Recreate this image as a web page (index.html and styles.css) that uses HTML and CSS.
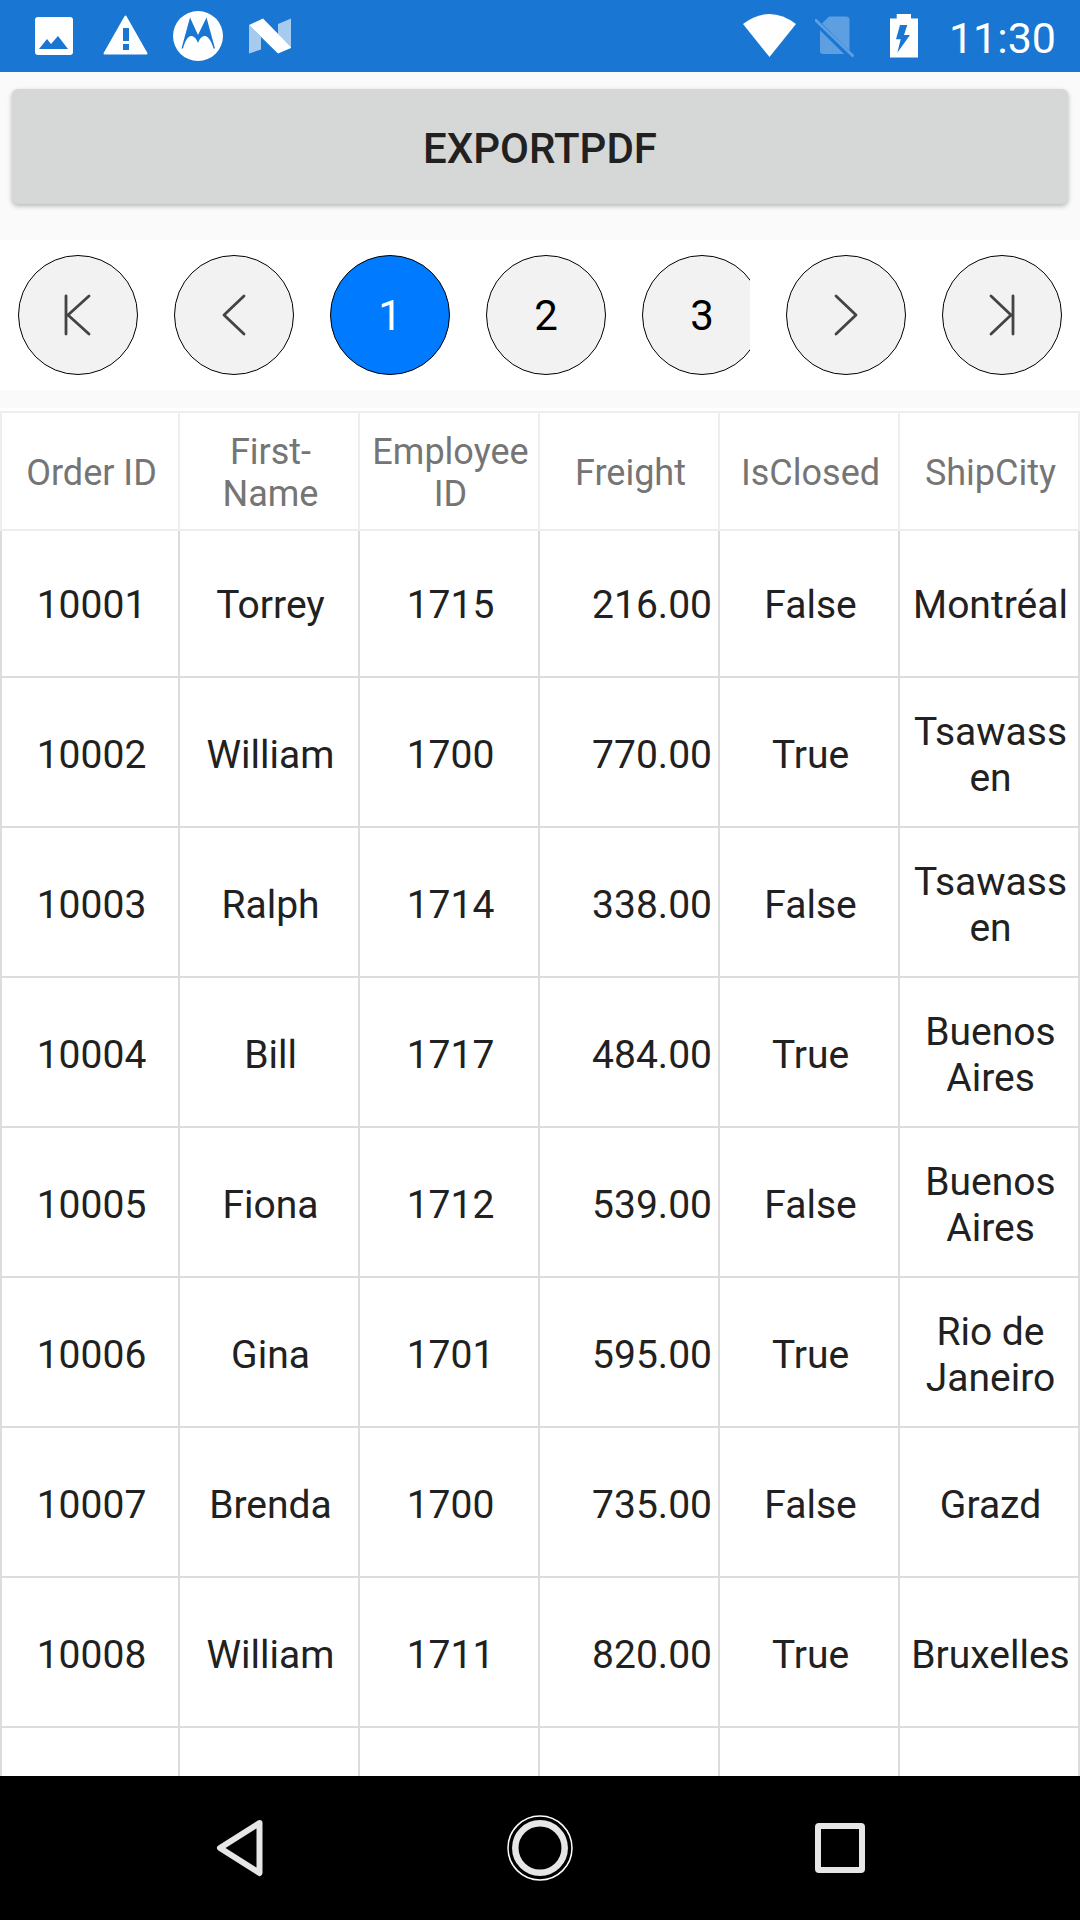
FILE: index.html
```html
<!DOCTYPE html>
<html lang="en">
<head>
    <meta charset="UTF-8">
    <meta name="viewport" content="width=device-width, initial-scale=1.0">
    <title>Export PDF</title>
    <link rel="stylesheet" href="styles.css">
</head>
<body>
    <div class="screen">
        <!-- status bar -->
        <div class="statusbar">
            <div class="status-left">
                <svg class="si pic" viewBox="35 11 38 50"><rect x="35" y="17" width="38" height="38" rx="3" fill="#fff"/><path d="M39 49 47 39 51 44 58 36 68 49Z" fill="#1976d2"/></svg>
                <svg class="si warn" viewBox="103 11 45 50"><path d="M125.5 16.5 104.5 53.5H146.5Z" fill="#fff" stroke="#fff" stroke-width="2" stroke-linejoin="round"/><path d="M123 28h6v13h-6zM123 44h6v6h-6z" fill="#1976d2"/></svg>
                <svg class="si moto" viewBox="173 11 50 50"><circle cx="198" cy="36" r="25" fill="#fff"/><path d="M181.5 48.5 190 17.5 198 35 206.5 17.5 215 48.5H213.5C211.500 41 208 36 205 36 202 36 200 38 198 43 196 38 194 36 191 36 188 36 185 41 183 48.500Z" fill="#1976d2"/></svg>
                <svg class="si nlogo" viewBox="248 11 44 50"><path d="M249 25 261 37V49.500L249 53.500ZM278 24 291 18.500V47L278 34Z" fill="#fff" opacity=".62"/><path d="M249 25 263 18.500 291 47V48L278 53.500Z" fill="#fff"/></svg>
            </div>
            <div class="status-right">
                <svg class="si wifi" viewBox="743 11 53 50"><path d="M743 24Q769.500 4 796 24L769.500 57Z" fill="#fff"/></svg>
                <svg class="si sim" viewBox="815 11 39 50"><path d="M829 16.500H846Q849.500 16.500 849.500 20V51Q849.500 54 846 54H823Q820 54 820 51V25.500Z" fill="#5d9fe1"/><path d="M813 19 852 57.500" stroke="#1976d2" stroke-width="6"/><path d="M815 19.500 853.500 56.500" stroke="#5d9fe1" stroke-width="3"/></svg>
                <svg class="si bat" viewBox="890 11 28 50"><path d="M896.700 14H911V18.500H918V57.500H890V18.500H896.700Z" fill="#fff"/><path d="M900 25H907.300L904 35H910L897.300 52.700 900.700 39.300H896Z" fill="#1976d2"/></svg>
                <span class="clock">11:30</span>
            </div>
        </div>

        <div class="toolbar">
            <button class="export-btn">EXPORTPDF</button>
        </div>

        <!-- pager -->
        <div class="pager">
            <div class="page-btn">
                <svg viewBox="0 0 120 120"><path d="M48 41V79M71 41 50 60 71 79"/></svg>
            </div>
            <div class="page-btn">
                <svg viewBox="0 0 120 120"><path d="M70 41 50 60 70 79"/></svg>
            </div>
            <div class="page-list">
                <div class="page-btn active">1</div>
                <div class="page-btn">2</div>
                <div class="page-btn">3</div>
            </div>
            <div class="page-btn">
                <svg viewBox="0 0 120 120"><path d="M50 41 70 60 50 79"/></svg>
            </div>
            <div class="page-btn">
                <svg viewBox="0 0 120 120"><path d="M71 41V79M49 41 69 60 49 79"/></svg>
            </div>
        </div>

        <!-- grid -->
        <div class="grid">
            <div class="row head">
                <div class="cell">Order ID</div>
                <div class="cell">First-<br>Name</div>
                <div class="cell">Employee ID</div>
                <div class="cell">Freight</div>
                <div class="cell">IsClosed</div>
                <div class="cell">ShipCity</div>
            </div>
            <div class="row first">
                <div class="cell">10001</div>
                <div class="cell">Torrey</div>
                <div class="cell">1715</div>
                <div class="cell num">216.00</div>
                <div class="cell">False</div>
                <div class="cell">Montréal</div>
            </div>
            <div class="row">
                <div class="cell">10002</div>
                <div class="cell">William</div>
                <div class="cell">1700</div>
                <div class="cell num">770.00</div>
                <div class="cell">True</div>
                <div class="cell">Tsawass<br>en</div>
            </div>
            <div class="row">
                <div class="cell">10003</div>
                <div class="cell">Ralph</div>
                <div class="cell">1714</div>
                <div class="cell num">338.00</div>
                <div class="cell">False</div>
                <div class="cell">Tsawass<br>en</div>
            </div>
            <div class="row">
                <div class="cell">10004</div>
                <div class="cell">Bill</div>
                <div class="cell">1717</div>
                <div class="cell num">484.00</div>
                <div class="cell">True</div>
                <div class="cell">Buenos Aires</div>
            </div>
            <div class="row">
                <div class="cell">10005</div>
                <div class="cell">Fiona</div>
                <div class="cell">1712</div>
                <div class="cell num">539.00</div>
                <div class="cell">False</div>
                <div class="cell">Buenos Aires</div>
            </div>
            <div class="row">
                <div class="cell">10006</div>
                <div class="cell">Gina</div>
                <div class="cell">1701</div>
                <div class="cell num">595.00</div>
                <div class="cell">True</div>
                <div class="cell">Rio de Janeiro</div>
            </div>
            <div class="row">
                <div class="cell">10007</div>
                <div class="cell">Brenda</div>
                <div class="cell">1700</div>
                <div class="cell num">735.00</div>
                <div class="cell">False</div>
                <div class="cell">Grazd</div>
            </div>
            <div class="row">
                <div class="cell">10008</div>
                <div class="cell">William</div>
                <div class="cell">1711</div>
                <div class="cell num">820.00</div>
                <div class="cell">True</div>
                <div class="cell">Bruxelles</div>
            </div>
            <div class="row">
                <div class="cell"></div>
                <div class="cell"></div>
                <div class="cell"></div>
                <div class="cell"></div>
                <div class="cell"></div>
                <div class="cell"></div>
            </div>
        </div>

        <!-- nav bar -->
        <div class="navbar">
            <div class="nav-slot">
                <svg class="nav-icon" viewBox="0 0 66 66"><path d="M55.500 8 16 33 55.500 58Z" transform="translate(-3 0)"/></svg>
            </div>
            <div class="nav-slot">
                <svg class="nav-icon" viewBox="0 0 66 66"><circle class="home-outer" cx="33" cy="33" r="32"/><circle class="home-inner" cx="33" cy="33" r="24.700"/></svg>
            </div>
            <div class="nav-slot">
                <svg class="nav-icon" viewBox="0 0 66 66"><rect x="11" y="11" width="44" height="44" rx="1"/></svg>
            </div>
        </div>
    </div>
</body>
</html>
```

FILE: styles.css
```css
* {
    box-sizing: border-box;
}
body {
    margin: 0;
    font-family: Roboto, "Liberation Sans", sans-serif;
}
.screen {
    width: 1080px;
    height: 1920px;
    display: flex;
    flex-direction: column;
    background-color: #fafafa;
    overflow: hidden;
}

/* status bar */
.statusbar {
    height: 72px;
    flex: none;
    display: flex;
    justify-content: space-between;
    align-items: center;
    padding: 0 24px 0 35px;
    background-color: #1976d2;
}
.status-left, .status-right {
    display: flex;
    align-items: center;
}
.si {
    height: 50px;
    display: block;
}
.pic { width: 38px; }
.warn { width: 45px; margin-left: 30px; }
.moto { width: 50px; margin-left: 25px; }
.nlogo { width: 44px; margin-left: 25px; }
.wifi { width: 53px; }
.sim { width: 39px; margin-left: 19px; }
.bat { width: 28px; margin-left: 36px; }
.clock {
    margin-left: 31px;
    padding-top: 3px;
    color: #fff;
    font-size: 43px;
    line-height: 50px;
}

/* export button */
.toolbar {
    height: 168px;
    flex: none;
    padding: 17px 12px 0;
}
.export-btn {
    display: block;
    width: 100%;
    height: 115px;
    padding: 3px 0 0;
    border: none;
    border-radius: 6px;
    background-color: #d6d7d7;
    color: #212121;
    font-family: inherit;
    font-size: 42px;
    font-weight: 500;
    box-shadow: 0 2px 5px rgba(0, 0, 0, 0.28);
}

/* pager */
.pager {
    height: 150px;
    flex: none;
    display: flex;
    align-items: center;
    gap: 36px;
    padding-left: 18px;
    background-color: #fff;
}
.page-list {
    width: 420px;
    display: flex;
    gap: 36px;
    overflow: hidden;
}
.page-btn {
    width: 120px;
    height: 120px;
    flex: none;
    display: flex;
    justify-content: center;
    align-items: center;
    border: 1.5px solid #000;
    border-radius: 50%;
    background-color: #f2f2f2;
    color: #000;
    font-size: 42px;
}
.page-btn.active {
    background-color: #007bff;
    color: #fff;
}
.page-btn svg {
    width: 120px;
    height: 120px;
    flex: none;
    fill: none;
    stroke: #444;
    stroke-width: 2.8;
    stroke-linecap: round;
    stroke-linejoin: round;
}

/* grid */
.grid {
    flex: 1;
    margin-top: 18px;
    padding-top: 3px;
    overflow: hidden;
    background-color: #fff;
}
.row {
    display: grid;
    grid-template-columns: repeat(6, 180px);
    height: 150px;
}
.row.head {
    height: 120px;
    border-top: 2px solid #eee;
}
.row.first {
    height: 147px;
}
.cell {
    display: flex;
    align-items: center;
    justify-content: center;
    text-align: center;
    padding: 5px 4px 0 7px;
    border-right: 2px solid #dcdcdc;
    border-bottom: 2px solid #dcdcdc;
    color: #212121;
    font-size: 39px;
    line-height: 46px;
}
.first .cell {
    padding-top: 2px;
}
.cell:first-child {
    border-left: 2px solid #dcdcdc;
}
.cell.num {
    justify-content: flex-end;
    padding-right: 6px;
}
.head .cell {
    padding-top: 4px;
    border-color: #eee;
    color: #757575;
    font-size: 36px;
    line-height: 42px;
}

/* nav bar */
.navbar {
    height: 144px;
    flex: none;
    display: flex;
    justify-content: center;
    align-items: center;
    background-color: #000;
}
.nav-slot {
    width: 300px;
    display: flex;
    justify-content: center;
}
.nav-icon {
    width: 66px;
    height: 66px;
    fill: none;
    stroke: #e6e6e6;
    stroke-width: 6;
    stroke-linejoin: round;
}
.nav-icon .home-outer {
    stroke: #fff;
    stroke-width: 1.5;
}
.nav-icon .home-inner {
    stroke-width: 6.5;
}
```
